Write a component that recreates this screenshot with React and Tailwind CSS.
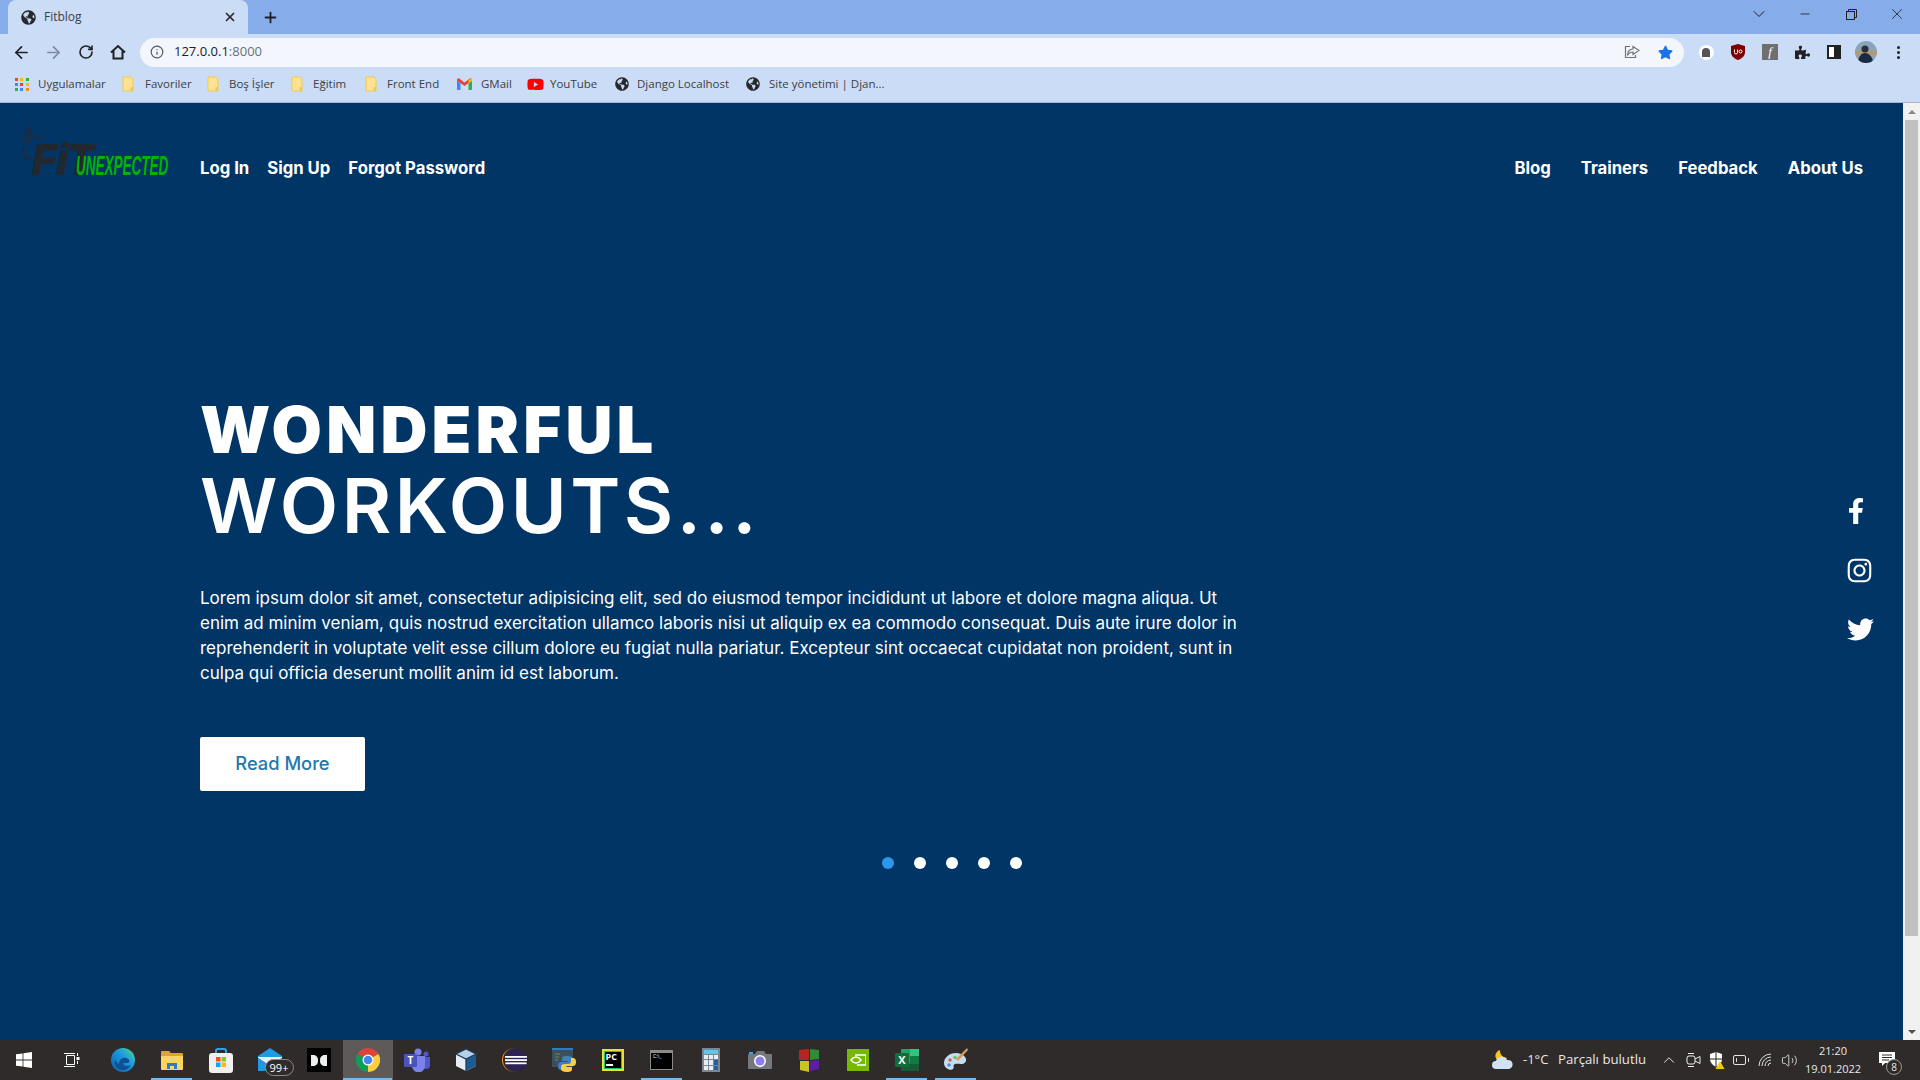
import { ArrowLeft, ArrowRight, RotateCw, Info, Plus, X, Minus, ChevronDown, ChevronUp, Volume2, BatteryLow } from "lucide-react";
import { FaGlobeAmericas, FaPuzzlePiece, FaStar, FaFacebookF, FaInstagram, FaTwitter, FaYoutube } from "react-icons/fa";

const chromeFont = "font-['Open_Sans',_'Noto_Sans',_sans-serif]";
const webFont = "font-['Inter',_'Liberation_Sans',_sans-serif]";

function Folder() {
  return (
    <svg width="12" height="16" viewBox="0 0 12 16" className="shrink-0">
      <path d="M1 1h8l2 2v12H1z" fill="#fde293" stroke="#f2c94c" strokeWidth="1" />
      <rect x="8.5" y="11" width="2.5" height="4" fill="#f2c94c" />
    </svg>
  );
}

function AppsGrid() {
  const colors = ["#ea4335", "#fbbc05", "#34a853", "#4285f4", "#ea4335", "#fbbc05", "#34a853", "#4285f4", "#fb8c00"];
  return (
    <div className="grid grid-cols-3 gap-[2px] w-[14px] shrink-0">
      {colors.map((c, i) => (
        <span key={i} className="w-[3px] h-[3px]" style={{ background: c }} />
      ))}
    </div>
  );
}

function Gmail() {
  return (
    <svg width="15" height="12" viewBox="0 0 15 12" className="shrink-0">
      <path d="M0 2v9a1 1 0 0 0 1 1h2.5V5.5z" fill="#4285f4" />
      <path d="M15 2v9a1 1 0 0 1-1 1h-2.5V5.5z" fill="#34a853" />
      <path d="M0 2.5 7.5 8 15 2.5V1.5A1.4 1.4 0 0 0 12.8.6L7.5 4.6 2.2.6A1.4 1.4 0 0 0 0 1.5z" fill="#ea4335" />
      <path d="M11.5 2.2 15 0v3l-3.5 2.6z" fill="#fbbc05" />
    </svg>
  );
}

function Bookmark({ icon, label, width, gap = 9 }) {
  return (
    <div className="flex items-center shrink-0" style={{ width }}>
      {icon}
      <span className="text-[11.5px] text-[#3d4043] whitespace-nowrap" style={{ marginLeft: gap }}>{label}</span>
    </div>
  );
}

function TabStrip() {
  return (
    <div className="h-[34px] bg-[#86ace9] flex items-end pl-[8px] shrink-0">
      <div className="w-[240px] h-[34px] bg-[#cbdcf6] rounded-t-[8px] flex items-center pl-[13px] pr-[11px]">
        <FaGlobeAmericas size={15} color="#27282b" />
        <span className="ml-[8px] text-[12px] text-[#3d4043]">Fitblog</span>
        <X size={14} strokeWidth={3} color="#2a2b2e" className="ml-auto" />
      </div>
      <div className="w-[44px] h-[34px] flex items-center justify-center">
        <Plus size={17} strokeWidth={2.5} color="#1d1f22" />
      </div>
      <div className="ml-auto flex items-center h-[34px] pb-[6px]">
        <div className="w-[46px] flex justify-center"><ChevronDown size={20} strokeWidth={1.2} color="#202124" /></div>
        <div className="w-[46px] flex justify-center"><Minus size={14} strokeWidth={1.4} color="#202124" /></div>
        <div className="w-[46px] flex justify-center">
          <svg width="11" height="11" viewBox="0 0 11 11" fill="none" stroke="#202124">
            <rect x="0.5" y="2.5" width="8" height="8" />
            <path d="M2.5 2.5v-2h8v8h-2" />
          </svg>
        </div>
        <div className="w-[46px] flex justify-center"><X size={18} strokeWidth={1.1} color="#202124" /></div>
      </div>
    </div>
  );
}

function Toolbar() {
  return (
    <div className="h-[36px] bg-[#cbdcf6] flex items-center pl-[12px] shrink-0">
      <div className="w-[32px]"><ArrowLeft size={19} strokeWidth={2.2} color="#202124" /></div>
      <div className="w-[32px]"><ArrowRight size={19} strokeWidth={2.2} color="#7f8aa0" /></div>
      <div className="w-[32px] pl-[2px]"><RotateCw size={16} strokeWidth={2.4} color="#202124" /></div>
      <div className="w-[32px] pl-[1px]">
        <svg width="18" height="18" viewBox="0 0 18 18" fill="none" stroke="#202124" strokeWidth="2">
          <path d="M2 9.5 9 3l7 6.5M4.5 8v7.5h9V8" />
        </svg>
      </div>
      <div className="w-[1544px] h-[29px] bg-[#f3f6fc] rounded-full flex items-center pl-[10px] pr-[11px]">
        <Info size={14} strokeWidth={2} color="#55585e" />
        <span className="ml-[10px] text-[13px] text-[#202124]">127.0.0.1<span className="text-[#6b6f76]">:8000</span></span>
        <svg width="16" height="14" viewBox="0 0 16 14" fill="none" stroke="#6f7276" strokeWidth="1.2" className="ml-auto mr-[18px]">
          <path d="M9 1.5 15 5.5 9 9.5V7C6 7 4.5 8.5 3.5 10.5 3.5 6.5 5.5 4 9 4z" />
          <path d="M6 1.5H1.5v11h10V10" />
        </svg>
        <FaStar size={15} color="#1a73e8" />
      </div>
      <div className="flex items-center ml-[6px]">
        <div className="w-[32px] flex justify-center">
          <div className="w-[15px] h-[15px] rounded-full bg-white flex items-center justify-center">
            <span className="w-[8px] h-[9px] rounded-t-full bg-[#555]" />
          </div>
        </div>
        <div className="w-[32px] flex justify-center">
          <svg width="14" height="16" viewBox="0 0 14 16">
            <path d="M7 0 14 2v6c0 4-3 6.500-7 8-4-1.500-7-4-7-8V2z" fill="#800000" />
            <path d="M3.500 5.500v3a1.500 1.500 0 0 0 3 0v-3M8 7.500a1.500 1.500 0 1 0 3 0 1.500 1.500 0 1 0-3 0" fill="none" stroke="#fff" strokeWidth="1" />
          </svg>
        </div>
        <div className="w-[32px] flex justify-center">
          <div className="w-[16px] h-[16px] bg-[#6f6f6f] text-white text-[13px] leading-[16px] text-center italic font-['Liberation_Serif',_serif]">f</div>
        </div>
        <div className="w-[32px] flex justify-center"><FaPuzzlePiece size={15} color="#202124" /></div>
        <div className="w-[32px] flex justify-center">
          <div className="w-[14px] h-[14px] border-2 border-[#202124] border-r-[7px] bg-white" />
        </div>
        <div className="w-[32px] flex justify-center">
          <svg width="22" height="22" viewBox="0 0 22 22">
            <defs><clipPath id="av"><circle cx="11" cy="11" r="11" /></clipPath></defs>
            <g clipPath="url(#av)">
              <rect width="22" height="22" fill="#8aa4ba" />
              <rect y="10" width="22" height="4" fill="#b39a6a" />
              <circle cx="10" cy="8" r="3.500" fill="#2a2f3a" />
              <path d="M3 22c0-7 4-10 7-10s8 3 8 10z" fill="#1b2a44" />
            </g>
          </svg>
        </div>
        <div className="w-[32px] flex flex-col items-center gap-[2px]">
          <span className="w-[3px] h-[3px] rounded-full bg-[#202124]" />
          <span className="w-[3px] h-[3px] rounded-full bg-[#202124]" />
          <span className="w-[3px] h-[3px] rounded-full bg-[#202124]" />
        </div>
      </div>
    </div>
  );
}

function BookmarksBar() {
  const globe = <FaGlobeAmericas size={14} color="#27282b" className="shrink-0" />;
  return (
    <div className="h-[33px] bg-[#cbdcf6] border-b border-[#a9b6cc] flex items-center pl-[15px] pb-[4px] shrink-0">
      <Bookmark icon={<AppsGrid />} label="Uygulamalar" width={107} />
      <Bookmark icon={<Folder />} label="Favoriler" width={85} gap={11} />
      <Bookmark icon={<Folder />} label="Boş İşler" width={84} gap={10} />
      <Bookmark icon={<Folder />} label="Eğitim" width={74} gap={10} />
      <Bookmark icon={<Folder />} label="Front End" width={92} gap={10} />
      <Bookmark icon={<Gmail />} label="GMail" width={70} />
      <Bookmark icon={<FaYoutube size={17} color="#f00" className="shrink-0" />} label="YouTube" width={88} gap={6} />
      <Bookmark icon={globe} label="Django Localhost" width={131} gap={8} />
      <Bookmark icon={globe} label="Site yönetimi | Djan..." width={140} gap={9} />
    </div>
  );
}

function Logo() {
  return (
    <div className="relative w-[178px] h-[52px] flex items-end mb-[34px] shrink-0">
      <svg width="24" height="36" viewBox="0 0 24 36" fill="none" stroke="#23293a" strokeWidth="1.5" className="absolute left-0 top-0">
        <path d="M7 1C2 8 0 20 3 30c2 3 6 4 10 3M7 1c2 0 2 3 1 5-2 4-2 10 0 14M8 13c3-3 6-4 9-2l5 1" />
      </svg>
      <span className="ml-[10px] italic font-black text-[42px] leading-[36px] tracking-[-1px] text-[#23272e] [-webkit-text-stroke:1.5px_#23272e] font-['Liberation_Sans',_sans-serif]">FiT</span>
      <span className="absolute left-[54px] bottom-0 w-[90px] italic font-bold text-[27px] leading-[24px] text-[#00b400] font-['Liberation_Sans',_sans-serif] whitespace-nowrap origin-left scale-x-[0.5]">UNEXPECTED</span>
    </div>
  );
}

function Header() {
  return (
    <header className="h-[132px] flex items-center pl-[22px] pr-[40px] text-white text-[16.700px] font-bold shrink-0">
      <Logo />
      <nav className="flex gap-[18px]">
        <span>Log In</span>
        <span>Sign Up</span>
        <span>Forgot Password</span>
      </nav>
      <nav className="ml-auto flex gap-[30px]">
        <span>Blog</span>
        <span>Trainers</span>
        <span>Feedback</span>
        <span>About Us</span>
      </nav>
    </header>
  );
}

function Hero() {
  return (
    <section className="flex pl-[200px] pt-[159px]">
      <div className="w-[1060px]">
        <h1 className="text-white">
          <span className="block text-[65px] leading-[72px] font-black tracking-[4.200px]">WONDERFUL</span>
          <span className="block text-[76px] leading-[78px] font-semibold tracking-[3.500px]">WORKOUTS...</span>
        </h1>
        <div className="mt-[42px] text-[17px] leading-[25px] text-white whitespace-nowrap">
          <p>Lorem ipsum dolor sit amet, consectetur adipisicing elit, sed do eiusmod tempor incididunt ut labore et dolore magna aliqua. Ut</p>
          <p>enim ad minim veniam, quis nostrud exercitation ullamco laboris nisi ut aliquip ex ea commodo consequat. Duis aute irure dolor in</p>
          <p>reprehenderit in voluptate velit esse cillum dolore eu fugiat nulla pariatur. Excepteur sint occaecat cupidatat non proident, sunt in</p>
          <p>culpa qui officia deserunt mollit anim id est laborum.</p>
        </div>
        <button className="mt-[51px] w-[165px] h-[54px] bg-white rounded-[2px] text-[#1f78ad] text-[18.300px] font-medium">Read More</button>
      </div>
      <div className="ml-auto mr-[30px] w-[26px] pt-[104px] flex flex-col text-white">
        <FaFacebookF size={26} className="-ml-[4px]" />
        <FaInstagram size={27} className="mt-[33px] -ml-[1px]" />
        <FaTwitter size={27} className="mt-[32px]" />
      </div>
    </section>
  );
}

function Dots() {
  return (
    <div className="flex justify-center gap-[20px] mt-[66px]">
      <span className="w-[12px] h-[12px] rounded-full bg-[#2b96ea]" />
      <span className="w-[12px] h-[12px] rounded-full bg-white" />
      <span className="w-[12px] h-[12px] rounded-full bg-white" />
      <span className="w-[12px] h-[12px] rounded-full bg-white" />
      <span className="w-[12px] h-[12px] rounded-full bg-white" />
    </div>
  );
}

function Scrollbar() {
  return (
    <div className="w-[17px] bg-[#f1f1f1] flex flex-col shrink-0">
      <div className="h-[17px] flex items-center justify-center">
        <span className="w-0 h-0 border-x-[4px] border-x-transparent border-b-[4px] border-b-[#8a8a8a]" />
      </div>
      <div className="flex-1 px-[2px]">
        <div className="h-[816px] bg-[#c1c1c1]" />
      </div>
      <div className="h-[17px] flex items-center justify-center">
        <span className="w-0 h-0 border-x-[4px] border-x-transparent border-t-[4px] border-t-[#505050]" />
      </div>
    </div>
  );
}

const taskIcons = [
  // edge
  <svg width="24" height="24" viewBox="0 0 24 24">
    <defs><linearGradient id="edge" x1="0" y1="1" x2="1" y2="0"><stop offset="0" stopColor="#0c59a4" /><stop offset="0.6" stopColor="#1b9de2" /><stop offset="1" stopColor="#54dc7a" /></linearGradient></defs>
    <circle cx="12" cy="12" r="12" fill="url(#edge)" />
    <path d="M8 16c0-5 5-8 9-5 2 1 2 4-1 4h-4c0 3 5 4 8 2-2 5-9 7-14 3-2-2-3-5-2-8 1 2 2 3 4 4z" fill="#0f4f95" />
  </svg>,
  // explorer
  <svg width="24" height="20" viewBox="0 0 24 20">
    <path d="M1 2a1 1 0 0 1 1-1h7l2 2h11a1 1 0 0 1 1 1v3H1z" fill="#d9a52e" />
    <path d="M1 6h22v13a1 1 0 0 1-1 1H2a1 1 0 0 1-1-1z" fill="#fcd462" />
    <path d="M7 19v-6h10v6h-3v-3h-4v3z" fill="#1f7fd1" />
  </svg>,
  // store
  <svg width="24" height="25" viewBox="0 0 24 25">
    <path d="M7 7V3a2 2 0 0 1 2-2h6a2 2 0 0 1 2 2v4" fill="none" stroke="#26a5e8" strokeWidth="2" />
    <rect y="5" width="24" height="20" rx="3" fill="#f2f0ee" />
    <rect x="7" y="9" width="4.500" height="4.500" fill="#f1511b" />
    <rect x="12.500" y="9" width="4.500" height="4.500" fill="#80cc28" />
    <rect x="7" y="14.500" width="4.500" height="4.500" fill="#00adef" />
    <rect x="12.500" y="14.500" width="4.500" height="4.500" fill="#fbbc09" />
  </svg>,
  // mail
  <div className="relative w-[24px] h-[24px]">
    <svg width="24" height="23" viewBox="0 0 24 23" className="absolute left-0 top-0">
      <path d="M0 8 12 0l12 8v15H0z" fill="#1f9be6" />
      <path d="M0 9l12 8 12-8" fill="#e5f4fd" stroke="#fff" strokeWidth="1" />
    </svg>
    <span className="absolute left-[7px] top-[11px] w-[29px] h-[17px] rounded-full bg-[#2f2b2b] border border-[#8b8b8b] text-[11px] leading-[15px] text-center text-white">99+</span>
  </div>,
  // dolby
  <div className="w-[24px] h-[24px] bg-black flex items-center justify-center">
    <svg width="16" height="11" viewBox="0 0 16 11" fill="#eee">
      <path d="M0 0h3.500A5.500 5.500 0 0 1 7 5.500 5.500 5.500 0 0 1 3.500 11H0zM16 0h-3.500A5.500 5.500 0 0 0 9 5.500a5.500 5.500 0 0 0 3.500 5.500H16z" />
    </svg>
  </div>,
  // chrome
  <svg width="24" height="24" viewBox="0 0 24 24">
    <path d="M12 12 22.400 6A12 12 0 0 0 1.600 6z" fill="#db4437" />
    <path d="M12 12 1.600 6A12 12 0 0 0 12 24z" fill="#0f9d58" />
    <path d="M12 12 12 24A12 12 0 0 0 22.400 6z" fill="#ffcd40" />
    <circle cx="12" cy="12" r="5.500" fill="#fff" />
    <circle cx="12" cy="12" r="4.300" fill="#4285f4" />
  </svg>,
  // teams
  <svg width="26" height="24" viewBox="0 0 26 24">
    <circle cx="14" cy="4" r="3.500" fill="#7b83eb" />
    <circle cx="22" cy="6" r="2.500" fill="#5059c9" />
    <path d="M18 9h8v8a4 4 0 0 1-8 0z" fill="#5059c9" />
    <path d="M8 8h13v10a6 6 0 0 1-13 0z" fill="#7b83eb" />
    <rect y="6" width="13" height="13" rx="1" fill="#4b53bc" />
    <text x="6.500" y="16" textAnchor="middle" fontSize="10" fontWeight="700" fill="#fff" fontFamily="Open Sans">T</text>
  </svg>,
  // virtualbox
  <svg width="22" height="24" viewBox="0 0 22 24">
    <path d="M11 1 21 6v12l-10 5-10-5V6z" fill="#e8eef4" />
    <path d="M11 11 21 6v12l-10 5z" fill="#1d5c92" />
    <path d="M11 11 1 6l10-5 10 5z" fill="#b9d1e6" />
    <path d="M11 1 21 6 11 11 1 6zM11 11v12" fill="none" stroke="#1d3d5e" strokeWidth="1.300" />
  </svg>,
  // eclipse
  <svg width="25" height="24" viewBox="0 0 25 24">
    <circle cx="11.500" cy="12" r="11.500" fill="#f29111" />
    <circle cx="13" cy="12" r="12" fill="#2f2b2b" />
    <circle cx="14" cy="12" r="11" fill="#2c2255" />
    <rect x="3" y="8" width="22" height="1.800" fill="#fff" />
    <rect x="3" y="11.200" width="22" height="1.800" fill="#fff" />
    <rect x="3.500" y="14.400" width="21" height="1.800" fill="#fff" />
  </svg>,
  // python ide
  <svg width="24" height="24" viewBox="0 0 24 24">
    <rect width="21" height="19" fill="#3c4f5c" />
    <rect width="21" height="2" fill="#2a7dc0" />
    <path d="M3 6h5M3 9h4M3 12h3" stroke="#6f8a5a" strokeWidth="1.200" />
    <path d="M15 8c-4 0-5 1-5 3v2h5.500v1H9c-2 0-3 1.500-3 4s1 4 3 4h2v-3c0-2 1-3 3-3h4c1.500 0 3-1 3-3v-2c0-2-2-3-6-3z" fill="#3f80c0" />
    <path d="M15 8c-4 0-5 1-5 3v2h5.500v1H9c-2 0-3 1.500-3 4s1 4 3 4h2v-3c0-2 1-3 3-3h4c1.500 0 3-1 3-3v-2c0-2-2-3-6-3z" fill="#f7cf42" transform="rotate(180 15 16)" />
  </svg>,
  // pycharm
  <div className="w-[22px] h-[22px] bg-black border-2 border-[#e7e32e] shadow-[inset_0_0_0_1px_#19c37d] flex flex-col pl-[2px] pt-[1px]">
    <span className="text-[9px] leading-[10px] font-bold text-white">PC</span>
    <span className="w-[7px] h-[1.500px] bg-white mt-[2px]" />
  </div>,
  // terminal
  <div className="w-[23px] h-[20px] bg-black border border-[#8a8a8a] border-t-[3px] pl-[2px] flex items-start text-[5px] leading-[7px] text-white">
    C:\_
  </div>,
  // calculator
  <div className="w-[18px] h-[24px] bg-[#7a8791] p-[2px] flex flex-col gap-[1px]">
    <span className="h-[4px] bg-[#5cc8f0]" />
    <div className="grid grid-cols-3 gap-[1px] flex-1">
      {[0, 1, 2, 3, 4, 5, 6, 7, 8].map((n) => (
        <span key={n} className={n === 5 || n === 8 ? "bg-[#1f5fa3]" : "bg-[#e8eef2]"} />
      ))}
    </div>
  </div>,
  // camera
  <svg width="24" height="20" viewBox="0 0 24 20">
    <path d="M1 4h6l2-3h7l2 3h5a1 1 0 0 1 1 1v13a1 1 0 0 1-1 1H1a1 1 0 0 1-1-1V5a1 1 0 0 1 1-1z" fill="#75787d" />
    <rect x="1" y="2" width="4" height="2" fill="#35a4e8" />
    <circle cx="12" cy="11" r="6" fill="#fff" />
    <circle cx="12" cy="11" r="4.500" fill="#8f7cf0" />
  </svg>,
  // colour tiles
  <svg width="22" height="23" viewBox="0 0 22 23">
    <path d="M1 1l10-1v11H1z" fill="#b3261e" />
    <path d="M12 0l9 1v9l-9 1z" fill="#2f8a3a" />
    <path d="M2 12h9v11l-9-2z" fill="#c9c22a" />
    <path d="M12 12l9-1v9l-9 2z" fill="#5a1fa3" />
  </svg>,
  // nvidia
  <div className="w-[22px] h-[22px] bg-[#76b900] flex items-center justify-center">
    <svg width="16" height="12" viewBox="0 0 16 12" fill="none" stroke="#fff" strokeWidth="1.500">
      <path d="M5 1h11v10H7M1 6c3-4 7-4 10 0-3 4-7 4-10 0z" />
    </svg>
  </div>,
  // excel
  <svg width="24" height="22" viewBox="0 0 24 22">
    <rect x="6" width="18" height="22" rx="1" fill="#21a366" />
    <rect x="15" width="9" height="7" fill="#33c481" />
    <rect x="15" y="7" width="9" height="7.500" fill="#107c41" />
    <rect x="6" y="14.500" width="9" height="7.500" fill="#185c37" />
    <rect x="15" y="14.500" width="9" height="7.500" fill="#185c37" />
    <rect y="4" width="14" height="14" rx="1" fill="#0f6e3a" />
    <text x="7" y="15" textAnchor="middle" fontSize="11" fontWeight="700" fill="#fff" fontFamily="Open Sans">X</text>
  </svg>,
  // paint
  <svg width="24" height="24" viewBox="0 0 24 24">
    <path d="M12 5C5 5 0 10 0 15c0 6 7 8 9 6s-1-4 2-5 9 2 11-3c1-4-4-8-10-8z" fill="#c5dff0" />
    <circle cx="6" cy="12" r="1.800" fill="#d95b5b" />
    <circle cx="11" cy="9.500" r="1.800" fill="#6fbf6a" />
    <circle cx="5" cy="17" r="1.800" fill="#4f8fd9" />
    <path d="M23 0 24 2 14 13l-2-2z" fill="#d99a55" />
  </svg>,
];

// active apps get the light blue strip under them
const running = [1, 5, 11, 16, 17];

function Taskbar() {
  return (
    <div className={`h-[40px] bg-[#2f2b2b] flex items-stretch text-white shrink-0 ${chromeFont}`}>
      <div className="w-[48px] flex items-center justify-center">
        <svg width="16" height="16" viewBox="0 0 16 16" fill="#fff">
          <path d="M0 2.300 6.600 1.400v6.200H0zM7.400 1.300 16 0v7.600H7.400zM0 8.400h6.600v6.200L0 13.700zM7.400 8.400H16V16l-8.600-1.300z" />
        </svg>
      </div>
      <div className="w-[48px] flex items-center justify-center -translate-x-[1px]">
        <svg width="17" height="16" viewBox="0 0 17 16" fill="none" stroke="#fff">
          <path d="M3.500 3.500h8v9h-8zM1 1.500h11M1 14.500h11M14.500 1v3M14.500 9v3" />
          <rect x="13.500" y="5" width="3" height="3" fill="#fff" stroke="none" />
        </svg>
      </div>
      <div className="flex ml-[2px]">
        {taskIcons.map((icon, i) => (
          <div key={i} className="w-[49px] relative flex items-center justify-center">
            {i === 5 && <span className="absolute inset-0 -mx-[0.500px] bg-[#5e5a5a]" />}
            <span className="relative flex">{icon}</span>
            {running.includes(i) && <span className={`absolute bottom-0 h-[2px] bg-[#76b9ed] ${i === 5 ? "left-0 right-0" : "left-[4px] right-[4px]"}`} />}
          </div>
        ))}
      </div>
      <div className="ml-auto flex items-center text-[#e8e8e8]">
        <svg width="23" height="22" viewBox="0 0 23 22" className="mr-[9px]">
          <path d="M9 1a6 6 0 1 0 7 8A7 7 0 0 1 9 1z" fill="#f8c51c" />
          <path d="M5 20a4 4 0 0 1 0-8 6 6 0 0 1 11-1 4.500 4.500 0 0 1 2 9z" fill="#cfe3f5" />
        </svg>
        <span className="text-[13px] w-[35px]">-1°C</span>
        <span className="text-[13.200px] w-[99px] whitespace-nowrap">Parçalı bulutlu</span>
        <div className="w-[24px] flex justify-center"><ChevronUp size={18} strokeWidth={1.3} /></div>
        <div className="w-[24px] flex justify-center">
          <svg width="15" height="16" viewBox="0 0 15 16" fill="none" stroke="#eee">
            <rect x="1" y="4" width="8" height="8" rx="2" />
            <path d="M9 7l5-2.500v7L9 9M2 1.500h6M2 14.500h6" />
          </svg>
        </div>
        <div className="w-[24px] flex justify-center">
          <svg width="16" height="18" viewBox="0 0 16 18">
            <path d="M7 1l6 2v5c0 4-3 6-6 8-3-2-6-4-6-8V3z" fill="#fff" />
            <path d="M7 1v15M1 8h12" stroke="#222" strokeWidth="1" />
            <path d="M11 10l4.500 8h-9z" fill="#f5c518" />
          </svg>
        </div>
        <div className="w-[24px] flex justify-center"><BatteryLow size={18} strokeWidth={1.3} /></div>
        <div className="w-[24px] flex justify-center">
          <svg width="14" height="14" viewBox="0 0 14 14" fill="none" stroke="#ddd">
            <path d="M1 13A12 12 0 0 1 13 1M4 13a9 9 0 0 1 9-9M7 13a6 6 0 0 1 6-6M10 13a3 3 0 0 1 3-3" />
          </svg>
        </div>
        <div className="w-[24px] flex justify-center"><Volume2 size={17} strokeWidth={1.2} /></div>
        <div className="w-[66px] -ml-[1px] text-center text-[11px] leading-[18px] whitespace-nowrap">
          <div>21:20</div>
          <div>19.01.2022</div>
        </div>
        <div className="w-[54px] pl-[13px] flex">
          <div className="relative w-[18px] h-[16px]">
            <svg width="16" height="15" viewBox="0 0 16 15" className="absolute left-0 top-0">
              <path d="M0 0h16v11H6l-3 3v-3H0z" fill="#fff" />
              <path d="M3 3h10M3 5.500h10M3 8h7" stroke="#2f2b2b" />
            </svg>
            <span className="absolute left-[7px] top-[7px] w-[16px] h-[16px] rounded-full bg-[#2f2b2b] border border-[#9a9a9a] text-[10px] leading-[14px] text-center">8</span>
          </div>
        </div>
      </div>
    </div>
  );
}

export default function App() {
  return (
    <div className={`w-[1920px] h-[1080px] flex flex-col overflow-hidden ${chromeFont}`}>
      <TabStrip />
      <Toolbar />
      <BookmarksBar />
      <div className="flex-1 min-h-0 flex">
        <main className={`flex-1 min-w-0 bg-[#003566] ${webFont}`}>
          <Header />
          <Hero />
          <Dots />
        </main>
        <Scrollbar />
      </div>
      <Taskbar />
    </div>
  );
}
